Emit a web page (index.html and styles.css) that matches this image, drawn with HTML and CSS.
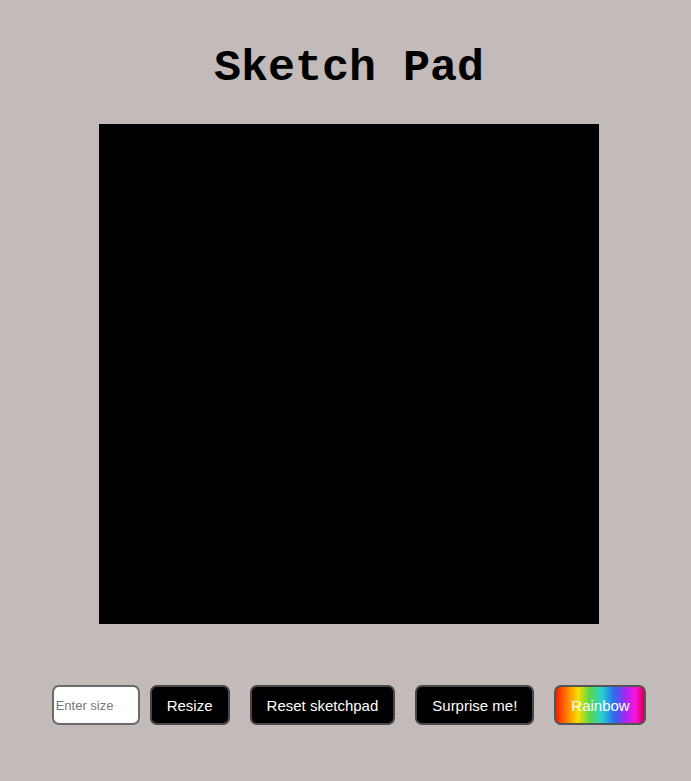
FILE: index.html
```html
<!DOCTYPE html>
<html>
<head>
<meta charset="utf-8">
<link rel="stylesheet" href="styles.css">
</head>
<body>
<main class="page">
  <h1 class="title">Sketch Pad</h1>
  <div class="pad"></div>
  <div class="controls">
    <div class="group">
      <input class="size" type="text" placeholder="Enter size">
      <button class="btn">Resize</button>
    </div>
    <button class="btn">Reset sketchpad</button>
    <button class="btn">Surprise me!</button>
    <button class="btn rainbow">Rainbow</button>
  </div>
</main>
</body>
</html>
```
FILE: styles.css
```css
html, body {
  margin: 0;
  padding: 0;
  background: #c3baba;
}
.page {
  padding-left: 7px;
  display: flex;
  flex-direction: column;
  align-items: center;
}
.title {
  font-family: "Liberation Mono", monospace;
  font-weight: bold;
  font-size: 45px;
  line-height: 52px;
  margin: 43px 0 29px;
  color: #000;
}
.pad {
  width: 500px;
  height: 500px;
  background: #000;
}
.controls {
  margin-top: 61px;
  display: flex;
  gap: 20px;
  align-items: center;
}
.group {
  display: flex;
  gap: 10px;
}
.size {
  box-sizing: border-box;
  width: 88px;
  height: 40px;
  border: 2px solid #6e6a6a;
  border-radius: 7px;
  background: #fff;
  font-family: "Liberation Sans", Arial, sans-serif;
  font-size: 13px;
  padding: 0 2px;
}
.size::placeholder {
  color: #777;
}
.btn {
  box-sizing: border-box;
  height: 40px;
  padding: 0 15px;
  border: 2px solid #4a4646;
  border-radius: 7px;
  background: #000;
  color: #fff;
  font-family: "Liberation Sans", Arial, sans-serif;
  font-size: 15px;
}
.rainbow {
  width: 92px;
  border-color: #555;
  background: linear-gradient(to right, #ff1a00 0%, #ff7a00 12%, #f5e000 25%, #5ad84a 38%, #2ad0d0 52%, #2a6cf0 66%, #9a2cf0 78%, #ff10e0 90%, #d0004a 100%);
}
```
